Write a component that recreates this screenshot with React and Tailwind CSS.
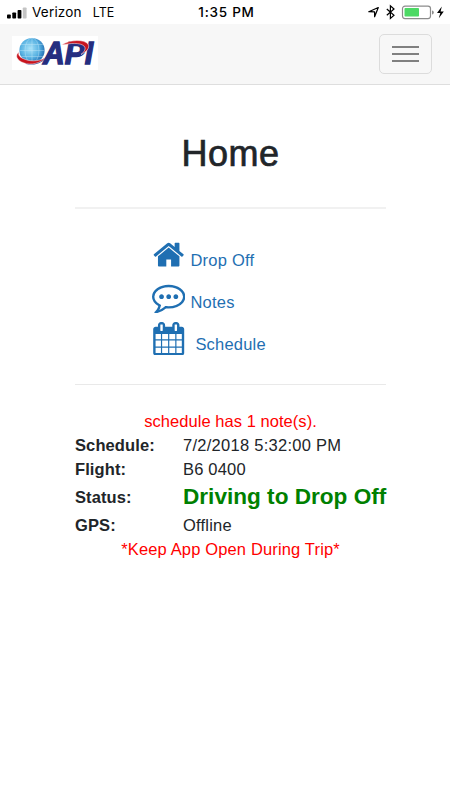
/**
 * Driver Home Screen
 * Status bar, navbar, quick links and details of the current trip
 */
const links = [
  {
    label: "Drop Off",
    textClass: "ml-[5px] mt-[10px] tracking-[0.23px]",
    path: "M1472 992v480q0 26-19 45t-45 19h-384v-384h-256v384h-384q-26 0-45-19t-19-45v-480q0-1 .5-3t.5-3l575-474 575 474q1 2 1 6zm223-69l-62 74q-8 9-21 11h-3q-13 0-21-7l-692-577-692 577q-12 8-24 7-13-2-21-11l-62-74q-8-10-7-23.5t11-21.5l719-599q32-26 76-26t76 26l244 204v-195q0-14 9-23t23-9h192q14 0 23 9t9 23v408l219 182q10 8 11 21.5t-7 23.5z"
  },
  {
    label: "Notes",
    textClass: "ml-[5px] mt-[10px] tracking-[0.25px]",
    path: "M640 896q0 53-37.500 90.500t-90.500 37.500-90.500-37.500-37.500-90.500 37.500-90.500 90.500-37.500 90.500 37.500 37.500 90.500zm384 0q0 53-37.500 90.500t-90.500 37.500-90.500-37.500-37.500-90.500 37.500-90.500 90.500-37.500 90.500 37.500 37.500 90.500zm384 0q0 53-37.500 90.500t-90.500 37.500-90.500-37.500-37.500-90.500 37.500-90.500 90.500-37.500 90.500 37.500 37.500 90.500zm-512-512q-204 0-381.500 69.500t-282 187.500-104.500 255.500q0 112 71.500 213.500t201.500 175.500l87 50-27 96q-24 91-70 172 152-63 275-171l43-38 57 6q69 8 130 8 204 0 381.500-69.500t282-187.500 104.500-255.500-104.500-255.500-282-187.500-381.500-69.500zm896 512q0 174-120 321.500t-326 233-450 85.500q-70 0-145-8-198 175-460 242-49 14-114 22h-5q-15 0-27-10.500t-16-27.500v-1q-3-4-.5-12t2-10 4.500-9.500l6-9 7-8.500 8-9q7-8 31-34.500t34.500-38 31-39.500 32.500-51 27-59 26-76q-157-89-247.500-220t-90.500-281q0-130 71-248.500t191-204.500 286-136.500 348-50.500 348 50.500 286 136.500 191 204.500 71 248.500z"
  },
  {
    label: "Schedule",
    textClass: "ml-[10px] mt-[10px] tracking-[0.2px]",
    path: "M192 1664h288v-288h-288v288zm352 0h320v-288h-320v288zm-352-352h288v-320h-288v320zm352 0h320v-320h-320v320zm-352-384h288v-288h-288v288zm736 736h320v-288h-320v288zm-384-736h320v-288h-320v288zm768 736h288v-288h-288v288zm-384-352h320v-320h-320v320zm-352-864v-288q0-13-9.500-22.500t-22.500-9.500h-64q-13 0-22.500 9.500t-9.500 22.500v288q0 13 9.500 22.500t22.500 9.500h64q13 0 22.500-9.500t9.500-22.500zm736 864h288v-320h-288v320zm-384-384h320v-288h-320v288zm384 0h288v-288h-288v288zm32-480v-288q0-13-9.500-22.500t-22.500-9.500h-64q-13 0-22.500 9.500t-9.500 22.500v288q0 13 9.500 22.500t22.500 9.500h64q13 0 22.500-9.500t9.500-22.500zm384-64v1280q0 52-38 90t-90 38h-1408q-52 0-90-38t-38-90v-1280q0-52 38-90t90-38h128v-96q0-66 47-113t113-47h64q66 0 113 47t47 113v96h384v-96q0-66 47-113t113-47h64q66 0 113 47t47 113v96h128q52 0 90 38t38 90z"
  }
];

const details = [
  { label: "Schedule:", value: "7/2/2018 5:32:00 PM", rowClass: "h-6", valueClass: "tracking-[0.27px]" },
  { label: "Flight:", value: "B6 0400", rowClass: "h-6", valueClass: "tracking-[0.2px]" },
  { label: "Status:", value: "Driving to Drop Off", rowClass: "h-8", valueClass: "text-[22.6px] font-bold text-[#008000]" },
  { label: "GPS:", value: "Offline", rowClass: "h-6", valueClass: "tracking-[0.2px]" }
];

const StatusBar = () => (
  <div className="flex h-6 items-center bg-white pl-[7px] pr-[4px] font-['Inter',sans-serif] text-[13.5px] text-black">
    <div className="flex flex-1 items-center">
      <svg className="mt-px" width="20" height="12" viewBox="0 0 20 12">
        <rect x="0" y="7.500" width="3.800" height="4" rx="0.8" />
        <rect x="5.300" y="5.500" width="3.800" height="6" rx="0.8" />
        <rect x="10.600" y="3" width="3.800" height="8.500" rx="0.800" />
        <rect x="15.800" y="0.500" width="3.800" height="11" rx="0.800" fill="#c4c4c4" />
      </svg>
      <span className="ml-[5px] tracking-[0.2px]">Verizon</span>
      <span className="ml-[11px] mt-px text-[12.5px]">LTE</span>
    </div>
    <span className="font-medium tracking-[0.75px]">1:35 PM</span>
    <div className="flex flex-1 justify-end">
      <svg width="78" height="16" viewBox="0 0 78 16">
        {/* Location arrow */}
        <path d="M0.800 7.700L10.300 3.500L6.600 12.800V7.800Z" fill="none" stroke="#000" strokeWidth="1.200" strokeLinejoin="round" />
        {/* Bluetooth */}
        <path d="M18.800 5L26 11.200L22.400 14.500V1.800L26 5L18.800 11.200" fill="none" stroke="#000" strokeWidth="1.200" />
        {/* Battery */}
        <rect x="34.500" y="2.100" width="28" height="12.500" rx="2.500" fill="#fff" stroke="#8c8c8c" strokeWidth="1.200" />
        <rect x="36.500" y="4.100" width="14.500" height="8.500" rx="0.800" fill="#4cd964" />
        <path d="M64 6.400q1.800 0 1.800 2t-1.800 2z" fill="#8c8c8c" />
        <path d="M73.800 2.500L69 9H72.300L70.800 14.300L75.800 7.500H72.600Z" fill="#000" />
      </svg>
    </div>
  </div>
);

const Logo = () => (
  <svg width="86" height="34" viewBox="0 0 86 34">
    <defs>
      <radialGradient id="globe" cx="42%" cy="42%" r="62%">
        <stop offset="0" stopColor="#a8e2f8" />
        <stop offset="0.6" stopColor="#58b2e2" />
        <stop offset="1" stopColor="#1f6cb2" />
      </radialGradient>
    </defs>
    <rect width="86" height="34" fill="#fff" />
    <circle cx="20" cy="14.500" r="12.600" fill="url(#globe)" />
    <g fill="none" stroke="#d4f1fc" strokeWidth="0.500" opacity="0.7">
      <path d="M20 2v25M7.500 14.500h25M9 8.500h22M9 20.500h22" />
      <ellipse cx="20" cy="14.500" rx="7" ry="12.500" />
    </g>
    <path d="M14 28C24 30 31 26.500 35 20.500C28 25.500 20 27.500 12 25.500Z" fill="#243080" />
    <path d="M7 16C2.500 19 4.500 24.500 12 27C19 29.500 28 27.500 34 21.500C26 26 17 25.500 11 22.500C7.500 21 6 19 7 16Z" fill="#c8141e" stroke="#fff" strokeWidth="0.500" />
    <text x="31" y="28.300" textLength="50" lengthAdjust="spacingAndGlyphs" fontFamily="Liberation Sans, sans-serif" fontSize="30.500" fontWeight="bold" fontStyle="italic" fill="#252e80" stroke="#252e80" strokeWidth="1.300">API</text>
    <path d="M49.500 9C58 3.500 72 3 76 8C78.500 12 74 16 69 18.500C72.500 15.500 74.500 12.500 72 10C68 6.500 59 7 49.500 9Z" fill="#c8141e" stroke="#fff" strokeWidth="0.500" />
  </svg>
);

const Navbar = () => (
  <nav className="flex h-[61px] items-start justify-between border-b border-[#dedede] bg-[#f7f7f7] pl-3 pr-[18px]">
    <div className="pt-3"><Logo /></div>
    <button aria-label="Menu" className="mt-[10px] flex h-10 w-[53px] flex-col items-center justify-center gap-[5px] rounded-[5px] border border-[#dcdcdc]">
      <span className="h-[2px] w-[27px] bg-[#808080]"></span>
      <span className="h-[2px] w-[27px] bg-[#808080]"></span>
      <span className="h-[2px] w-[27px] bg-[#808080]"></span>
    </button>
  </nav>
);

const App = () => {
  return (
    <div className="h-[800px] w-[450px] overflow-hidden bg-white font-['Liberation_Sans',Arial,sans-serif] text-[16.5px] leading-6 text-[#212529]">
      <StatusBar />
      <Navbar />

      <main className="ml-[75px] w-[311px]">
        <h1 className="pt-[47px] text-center text-[36px] leading-[44px] tracking-[0.5px] [-webkit-text-stroke:0.7px_#212529]">Home</h1>
        <hr className="mt-[31px] border-t-2 border-[#f1f1f1]" />

        {/* Quick Links */}
        <div className="mt-[29px] flex flex-col pl-[77px]">
          {links.map((link) => (
            <a key={link.label} href="#" className="flex h-[42px] items-start text-[#1f6fb2]">
              <svg width="33.400" height="33.400" viewBox="0 0 1792 1792" fill="currentColor">
                <path d={link.path} />
              </svg>
              <span className={link.textClass}>{link.label}</span>
            </a>
          ))}
        </div>
        <hr className="mt-5 border-t border-[#e9e9e9]" />

        {/* Trip Details */}
        <p className="mt-6 text-center tracking-[0.05px] text-[#ff0000]">schedule has 1 note(s).</p>
        {details.map((item) => (
          <div key={item.label} className={`flex items-center whitespace-nowrap ${item.rowClass}`}>
            <span className="w-[108px] shrink-0 font-bold tracking-[0.1px]">{item.label}</span>
            <span className={item.valueClass}>{item.value}</span>
          </div>
        ))}
        <p className="text-center tracking-[0.15px] text-[#ff0000]">*Keep App Open During Trip*</p>
      </main>
    </div>
  );
};

export default App;
